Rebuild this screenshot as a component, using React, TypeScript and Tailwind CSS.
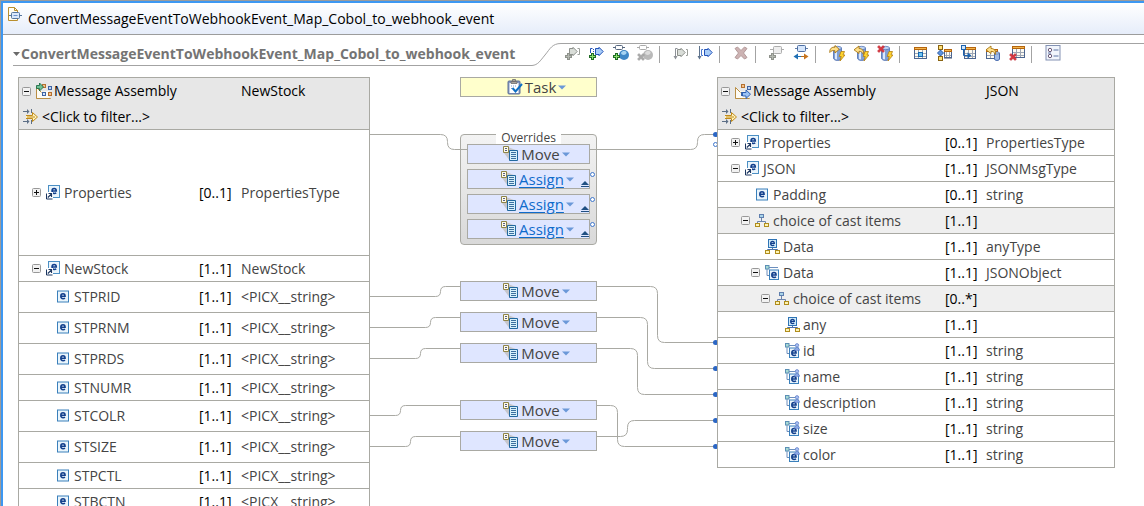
import React from "react";

type IconProps = { children: React.ReactNode; className?: string };

function Icon({ children, className = "" }: IconProps) {
  return (
    <svg
      viewBox="0 0 16 16"
      width="16"
      height="16"
      aria-hidden="true"
      className={`shrink-0 ${className}`}
      fill="none"
    >
      {children}
    </svg>
  );
}

/* ---------- shared glyph parts ---------- */

function Plus({ muted }: { muted?: boolean }) {
  return (
    <>
      <path
        d="M2 8h3v2h2v3h-2v2h-3v-2h-2v-3h2z"
        fill={muted ? "#8f938c" : "#1f6b24"}
        shapeRendering="crispEdges"
      />
      <path
        d="M3 9h1v2h2v1h-2v2h-1v-2h-2v-1h2z"
        fill={muted ? "#b4b8b1" : "#8be070"}
        shapeRendering="crispEdges"
      />
    </>
  );
}

function Cross({ x, y, muted }: { x: number; y: number; muted?: boolean }) {
  return (
    <g transform={`translate(${x} ${y})`}>
      <path
        d="M0 1.5 1.5 0 3.5 2 5.5 0 7 1.5 5 3.5 7 5.5 5.5 7 3.5 5 1.5 7 0 5.5 2 3.5z"
        fill={muted ? "#a9a9a9" : "#d8363f"}
        stroke={muted ? "#999" : "#b8202b"}
        strokeWidth=".5"
      />
    </g>
  );
}

function Pentagon({ x, y, muted }: { x: number; y: number; muted?: boolean }) {
  return (
    <path
      transform={`translate(${x} ${y})`}
      d="M.5 1.500v6h3.500v1.200l4.200-4.200L4 .3v1.200z"
      fill={muted ? "#d9ddd8" : "#a9cdf8"}
      stroke={muted ? "#8d918c" : "#2353b8"}
    />
  );
}

function Cylinder() {
  return (
    <>
      <path d="M4.500 3v10c0 3.300 8 3.300 8 0V3z" fill="#7f9fd6" stroke="#4a6cae" strokeWidth=".8" />
      <path d="M6 4v10l2 .6V4.500z" fill="#dbe8fb" />
      <ellipse cx="8.500" cy="3" rx="4" ry="1.700" fill="#bdd2f2" stroke="#4a6cae" strokeWidth=".7" />
      <path d="M12 6.500h3.500l-1.500 3.500h2l-5 6 1.200-4.500h-2z" fill="#ffd42e" stroke="#b47f10" strokeWidth=".8" />
    </>
  );
}

function Grid({ x = 1, y = 2, w = 13, h = 12 }: { x?: number; y?: number; w?: number; h?: number }) {
  const cell = w / 3;
  return (
    <g shapeRendering="crispEdges">
      <rect x={x} y={y} width={w} height={h} fill="#fdfbf2" />
      <path
        d={`M${x + cell} ${y + 3}v${h - 3}M${x + 2 * cell} ${y + 3}v${h - 3}M${x} ${y + 6}h${w}M${x} ${y + 9}h${w}`}
        stroke="#9fa7b5"
      />
      <path d={`M${x + 0.5} ${y + 3}V${y + h - 0.5}H${x + w - 0.5}V${y + 3}`} stroke="#4c6590" />
      <rect x={x} y={y} width={w} height="3" fill="#b5650e" />
      <rect x={x + 1} y={y + 1} width={w - 2} height="1" fill="#f3b64e" />
    </g>
  );
}

const CurveRight = () => (
  <path d="M.8 7.500C.5 3.500 3 1.800 6 2.200V.5l4.200 3.800L6 8V5.800C3.800 5.200 2.300 5.600 .8 7.500z" fill="#ffe08a" stroke="#a97713" strokeWidth=".9" />
);
const CurveLeft = () => (
  <path d="M10.500 9.500c.8-4-1.500-6-4.500-6V1L1 4.800 6 8.500V6.300c2 0 3.500 1 4.500 3.200z" fill="#ffe08a" stroke="#a97713" strokeWidth=".9" />
);

/* ---------- toolbar ---------- */

const toolGroups: { label: string; art: React.ReactNode }[][] = [
  [
    {
      label: "Add input",
      art: (
        <>
          <Pentagon x={4} y={2} muted />
          <path d="M12.500 3.500h2v6h-2" stroke="#9b9f9a" />
          <Plus muted />
        </>
      ),
    },
    {
      label: "Add output",
      art: (
        <>
          <path d="M1.500 8V3.500h2" stroke="#2353b8" />
          <path d="M4.500 4v6" stroke="#2353b8" strokeDasharray="1 1" />
          <Pentagon x={6} y={2} />
          <Plus />
        </>
      ),
    },
    {
      label: "Add database",
      art: (
        <>
          <circle cx="11" cy="10" r="5" fill="#3f87c6" />
          <path d="M8 8c1-2.500 5-2.500 5.500-.5S9 11.500 8 8z" fill="#a6d3f2" />
          <path d="M0 2.500h12" stroke="#56677f" />
          <rect x="2.500" y=".5" width="7" height="4" rx="1" fill="#fff" stroke="#56677f" />
          <Plus />
        </>
      ),
    },
    {
      label: "Remove database",
      art: (
        <>
          <circle cx="11" cy="10" r="5" fill="#b9b9b9" />
          <path d="M8 8c1-2.500 5-2.500 5.500-.5S9 11.500 8 8z" fill="#dcdcdc" />
          <path d="M0 2.500h12" stroke="#aaa" />
          <rect x="2.500" y=".5" width="7" height="4" rx="1" fill="#fff" stroke="#aaa" />
          <Cross x={0.5} y={8.5} muted />
        </>
      ),
    },
  ],
  [
    {
      label: "Match inputs",
      art: (
        <>
          <path d="M2.500 12V3.500h2" stroke="#8d9197" />
          <path d="M.5 11h4l-2 3.500z" fill="#8d9197" />
          <Pentagon x={4} y={3} muted />
          <path d="M13 4.500h1.500v6H13" stroke="#9b9f9a" />
        </>
      ),
    },
    {
      label: "Match outputs",
      art: (
        <>
          <path d="M2.500 1v11" stroke="#5f738c" />
          <path d="M.5 11h4l-2 3.500z" fill="#5f738c" />
          <path d="M6 4.500h-1.500v6H6" stroke="#4a78cf" />
          <Pentagon x={7} y={3} />
        </>
      ),
    },
  ],
  [
    {
      label: "Delete",
      art: (
        <path
          d="M2 3.500 4.500 2 8 5.500 11.500 2 14 3.500 10.500 8 14 12.500 11.500 14 8 10.500 4.500 14 2 12.500 5.500 8z"
          fill="#cdb3b3"
          stroke="#b49a9a"
        />
      ),
    },
  ],
  [
    {
      label: "Add transform",
      art: (
        <>
          <path d="M1 4.500h14" stroke="#adadad" />
          <rect x="4.500" y="1.500" width="8" height="7" rx="1" fill="#eee" stroke="#adadad" />
          <Plus muted />
        </>
      ),
    },
    {
      label: "Swap",
      art: (
        <>
          <path d="M2 3.500h13" stroke="#6680a8" />
          <rect x="4.500" y=".5" width="8" height="6" rx="1" fill="#d6e6fb" stroke="#4d6ea3" />
          <path d="M5 8.500v6L.5 11.500z" fill="#1e6fb5" />
          <path d="M4 11.500h5" stroke="#1e6fb5" />
          <path d="M8 11.500h4" stroke="#b36a1a" />
          <path d="M11 8.500v6l4.500-3z" fill="#c9751d" />
        </>
      ),
    },
  ],
  [
    { label: "Route to database", art: (<><Cylinder /><CurveRight /></>) },
    { label: "Return from database", art: (<><Cylinder /><CurveLeft /></>) },
    { label: "Delete from database", art: (<><Cylinder /><Cross x={0.5} y={0.5} /></>) },
  ],
  [
    {
      label: "Select table",
      art: (
        <>
          <Grid />
          <rect x="5.500" y="7.500" width="4" height="4" fill="#6fc5f2" stroke="#1666b0" />
        </>
      ),
    },
    {
      label: "Join table",
      art: (
        <>
          <Grid x={7} y={4} w={8} h={9} />
          <path d="M3.500 3v10" stroke="#8a6a1c" />
          <rect x="1.500" y=".5" width="4" height="4" fill="#ffe27a" stroke="#8a6412" />
          <rect x="1.500" y="11.500" width="4" height="4" fill="#ffe27a" stroke="#8a6412" />
          <path d="M3.500 5 6.500 8l-3 3-3-3z" fill="#5b93dd" stroke="#2a5ba8" />
        </>
      ),
    },
    {
      label: "Map to table",
      art: (
        <>
          <Grid x={3} y={2} w={12} h={12} />
          <path d="M2.500 5v5.500h5" stroke="#1c62ad" />
          <path d="M6.500 7.500v6l4-3z" fill="#1c62ad" />
          <rect x=".5" y=".5" width="4" height="4" fill="#cfe5fb" stroke="#1c62ad" />
        </>
      ),
    },
    {
      label: "Return table",
      art: (
        <>
          <Grid x={1} y={4} w={12} h={10} />
          <path d="M9.500 8v6c0 2 5 2 5 0V8z" fill="#9fbce8" stroke="#4a6cae" />
          <ellipse cx="12" cy="8" rx="2.500" ry="1" fill="#d6e4f8" stroke="#4a6cae" strokeWidth=".7" />
          <CurveLeft />
        </>
      ),
    },
    {
      label: "Remove table",
      art: (
        <>
          <Grid x={3} y={1} w={13} h={12} />
          <Cross x={0.5} y={8.5} />
        </>
      ),
    },
  ],
  [
    {
      label: "Properties form",
      art: (
        <>
          <rect x="1" y=".5" width="14" height="14.500" fill="#f1f5fc" stroke="#8492b3" />
          <circle cx="5" cy="5" r="1.700" stroke="#6b5a78" fill="#fff" />
          <circle cx="5" cy="11" r="1.700" stroke="#6b5a78" fill="#fff" />
          <path d="M8.500 5h5M8.500 11h5M3 8h3" stroke="#5c74a5" />
        </>
      ),
    },
  ],
];

/* ---------- tree icons ---------- */

type Kind =
  | "assemblyIn"
  | "assemblyOut"
  | "elementRef"
  | "element"
  | "choice"
  | "any"
  | "child"
  | "cast";

const E = ({ x, y, s = 1 }: { x: number; y: number; s?: number }) => (
  <path
    transform={`translate(${x} ${y}) scale(${s})`}
    d="M.8 3.200h4.300C5.100 1.600 4.300.8 3 .8S.8 1.700.8 3.300 1.700 5.700 3.100 5.700c.8 0 1.400-.2 1.900-.6"
    stroke="#123f8c"
    strokeWidth="1.500"
  />
);

function KindIcon({ kind }: { kind: Kind }) {
  switch (kind) {
    case "assemblyIn":
    case "assemblyOut":
      return (
        <Icon>
          <path d="M.5 4.500v11h14" fill="#fdfbf4" stroke="#c9a65c" />
          <path d="M.5 4.500v11h12.500V8L6 8.500z" fill="#fdfbf4" />
          <path d="M.5 15.500v-11l5 5M.5 15.500h14" stroke="#b98e45" />
          <rect x="6.500" y="1.500" width="3" height="3" fill="#f6c18d" stroke="#b4702f" />
          <rect x="12.500" y="3.500" width="3" height="3" fill="#bcd3f2" stroke="#3f64a4" />
          <rect x="6.500" y="9.500" width="3" height="3" fill="#d5e4f8" stroke="#3f64a4" />
          {kind === "assemblyIn" ? (
            <>
              <rect x="12.500" y="9.500" width="3" height="3" fill="#f6c18d" stroke="#b4702f" />
              <path d="M.5 2.500v3h3V8L7.500 4 3.500 0v2.500z" fill="#6fc095" stroke="#1e6d45" strokeWidth=".9" />
            </>
          ) : (
            <path d="M7.500 9.500v3.500h3.500v2.500l4.500-4.300L11 7v2.500z" fill="#9cc3f5" stroke="#2457ae" strokeWidth=".9" />
          )}
        </Icon>
      );
    case "elementRef":
      return (
        <Icon>
          <rect x="2.500" y=".5" width="11" height="12" fill="#eaf5fc" stroke="#4b8fc4" />
          <E x={5.200} y={2.800} />
          <rect x="0" y="7" width="7" height="7.500" fill="#fff" />
          <path d="M.5 8.500v5.500h6" stroke="#1c3660" />
          <path d="M1.800 12.500 5 9.300M2.500 8.500h3v3.500" stroke="#1c3660" strokeWidth="1.200" />
        </Icon>
      );
    case "element":
      return (
        <Icon>
          <rect x="1.500" y="2" width="11" height="11" fill="#eaf5fc" stroke="#3a80bb" />
          <E x={4} y={4} />
        </Icon>
      );
    case "choice":
      return (
        <Icon>
          <path d="M6.500 5v3M2.500 11V8.500h8V11" stroke="#6c84ad" />
          <rect x="4.500" y="1.500" width="4" height="3" fill="#a9d3e8" stroke="#5f7fae" />
          <rect x=".5" y="10.500" width="4" height="3" fill="#fdf3b5" stroke="#b08d1d" />
          <rect x="9.500" y="10.500" width="4" height="3" fill="#fdf3b5" stroke="#b08d1d" />
        </Icon>
      );
    case "any":
      return (
        <Icon>
          <path d="M7.500 9v2M2.500 12v-1.500h10V12" stroke="#4d72ab" />
          <rect x="3.500" y=".5" width="8" height="8" fill="#cfe9f8" stroke="#2f74b5" />
          <E x={5} y={1.700} s={0.85} />
          <rect x=".5" y="11.500" width="4" height="3" fill="#fdf3b5" stroke="#b08d1d" />
          <rect x="10.500" y="11.500" width="4" height="3" fill="#fdf3b5" stroke="#b08d1d" />
        </Icon>
      );
    case "child":
    case "cast":
      return (
        <Icon>
          <path d="M2 4v6.500h2.500M4 2.500h9" stroke="#6c8fbe" />
          <rect x=".5" y=".5" width="3.500" height="3.500" fill="#a7d9d3" stroke="#5b8fb5" />
          <rect x="4.500" y="5" width="9" height="9.500" fill="#eaf5fc" stroke="#3a80bb" />
          <E x={6} y={6.800} />
          {kind === "cast" && (
            <>
              <path d="M9.500 7.300c0-3.500 5-3.500 5 0z" fill="#93b0ec" stroke="#5876c4" strokeWidth=".7" />
              <circle cx="12" cy="2.300" r="1.700" fill="#a9c1f2" stroke="#5876c4" strokeWidth=".7" />
            </>
          )}
        </Icon>
      );
  }
}

const FilterIcon = () => (
  <Icon>
    <path d="M0 2.500h5M0 12.500h5M8.500 0v4M8.500 11v4" stroke="#5d6f86" />
    <path d="M4 0v5L6.500 2.500zM4 10v5l2.500-2.500z" fill="#5d6f86" />
    <path d="M3 6.500h6.500v-3l5 4.500-5 4.500v-3H3" fill="#fff3bd" stroke="#c08a1b" />
    <path d="M4 8h8" stroke="#c08a1b" />
  </Icon>
);

const MoveIcon = () => (
  <Icon>
    <path d="M5 1l9 3.500-7 10.500L1 7z" fill="#c6c6cb" />
    <path d="M.5.5h5v6h-5z" fill="#fffbe8" stroke="#8f8549" />
    <path d="M2 2.500h2M2 4.500h2" stroke="#555e85" />
    <path d="M6.500 4.500h8v10h-8z" fill="#d7f0fb" stroke="#21689f" />
    <path d="M8 6.500h5M8 8.500h5M8 10.500h5M8 12.500h5" stroke="#3b6f9f" />
  </Icon>
);

const TaskIcon = () => (
  <Icon>
    <rect x="1" y="2" width="12" height="13" rx="1" fill="#8299c4" stroke="#5e6f93" />
    <rect x="2.500" y="4" width="9" height="10" fill="#fff" />
    <path d="M4 2.500h6v2H4zM5.500.5h3v2h-3z" fill="#a9a39a" stroke="#6d6c70" strokeWidth=".8" />
    <path d="M4 7h5M4 9.500h2" stroke="#7d9fd0" strokeDasharray="1 1" />
    <path d="M5.500 9 8.500 12.500l6.500-7.500" stroke="#0d6fc4" strokeWidth="2" />
  </Icon>
);

const Caret = () => (
  <svg viewBox="0 0 8 5" width="8" height="5" aria-hidden="true" className="shrink-0">
    <path d="M0 .5h8l-4 4z" fill="#6b98d8" />
  </svg>
);

function Expander({ open, name }: { open: boolean; name: string }) {
  return (
    <button type="button" aria-label={`${open ? "Collapse" : "Expand"} ${name}`} aria-expanded={open} className="mr-[5px] block size-[9px] shrink-0">
      <svg viewBox="0 0 9 9" width="9" height="9" aria-hidden="true">
        <rect x=".5" y=".5" width="8" height="8" rx="1" fill="#f2f2f2" stroke="#989898" />
        <path d={open ? "M2 4.500h5" : "M2 4.500h5M4.500 2v5"} stroke="#111" />
      </svg>
    </button>
  );
}

/* ---------- trees ---------- */

type Row = {
  name: string;
  card: string;
  type?: string;
  kind: Kind;
  level: number;
  open?: boolean;
  height?: "tall" | "medium" | "last";
  shaded?: boolean;
};

const inputRows: Row[] = [
  { name: "Properties", card: "[0..1]", type: "PropertiesType", kind: "elementRef", level: 1, open: false, height: "tall" },
  { name: "NewStock", card: "[1..1]", type: "NewStock", kind: "elementRef", level: 1, open: true },
  { name: "STPRID", card: "[1..1]", type: "<PICX__string>", kind: "element", level: 2, height: "medium" },
  { name: "STPRNM", card: "[1..1]", type: "<PICX__string>", kind: "element", level: 2, height: "medium" },
  { name: "STPRDS", card: "[1..1]", type: "<PICX__string>", kind: "element", level: 2, height: "medium" },
  { name: "STNUMR", card: "[1..1]", type: "<PICX__string>", kind: "element", level: 2 },
  { name: "STCOLR", card: "[1..1]", type: "<PICX__string>", kind: "element", level: 2, height: "medium" },
  { name: "STSIZE", card: "[1..1]", type: "<PICX__string>", kind: "element", level: 2, height: "medium" },
  { name: "STPCTL", card: "[1..1]", type: "<PICX__string>", kind: "element", level: 2 },
  { name: "STBCTN", card: "[1..1]", type: "<PICX__string>", kind: "element", level: 2, height: "last" },
];

const outputRows: Row[] = [
  { name: "Properties", card: "[0..1]", type: "PropertiesType", kind: "elementRef", level: 1, open: false },
  { name: "JSON", card: "[1..1]", type: "JSONMsgType", kind: "elementRef", level: 1, open: true },
  { name: "Padding", card: "[0..1]", type: "string", kind: "element", level: 2 },
  { name: "choice of cast items", card: "[1..1]", kind: "choice", level: 2, open: true, shaded: true },
  { name: "Data", card: "[1..1]", type: "anyType", kind: "any", level: 3 },
  { name: "Data", card: "[1..1]", type: "JSONObject", kind: "child", level: 3, open: true },
  { name: "choice of cast items", card: "[0..*]", kind: "choice", level: 4, open: true, shaded: true },
  { name: "any", card: "[1..1]", kind: "any", level: 5 },
  { name: "id", card: "[1..1]", type: "string", kind: "cast", level: 5 },
  { name: "name", card: "[1..1]", type: "string", kind: "cast", level: 5 },
  { name: "description", card: "[1..1]", type: "string", kind: "cast", level: 5 },
  { name: "size", card: "[1..1]", type: "string", kind: "cast", level: 5 },
  { name: "color", card: "[1..1]", type: "string", kind: "cast", level: 5, height: "last" },
];

const indents = ["pl-[3px]", "pl-[13px]", "pl-[23px]", "pl-[33px]", "pl-[43px]", "pl-[53px]"];
const rowHeights = { normal: "h-[26px]", medium: "h-[31px]", tall: "h-[126px]", last: "h-[25px]" };

type TreeProps = {
  label: string;
  type: string;
  kind: Kind;
  rows: Row[];
  nameCol: string;
  cardCol: string;
};

function Tree({ label, type, kind, rows, nameCol, cardCol }: TreeProps) {
  return (
    <table aria-label={`${label} ${type}`} className="w-full table-fixed border-separate border-spacing-0 border border-[#a9a9a3] bg-white text-left">
      <colgroup>
        <col className={nameCol} />
        <col className={cardCol} />
        <col />
      </colgroup>
      <thead className="bg-[#e7e7e7] text-black">
        <tr className="h-[26px]">
          <th colSpan={2} className="p-0 pl-[3px] font-normal">
            <div className="flex items-center">
              <Expander open name={label} />
              <KindIcon kind={kind} />
              <span className="ml-[2px]">{label}</span>
            </div>
          </th>
          <th className="p-0 font-normal">{type}</th>
        </tr>
        <tr className="h-[26px]">
          <th colSpan={3} className="border-b border-[#a9a9a3] p-0 pl-1 font-normal">
            <button type="button" className="flex items-center gap-[3px]">
              <FilterIcon />
              <span>&lt;Click to filter...&gt;</span>
            </button>
          </th>
        </tr>
      </thead>
      <tbody className="text-[#444]">
        {rows.map((row, i) => {
          const line = i < rows.length - 1 ? "border-b border-[#a9a9a3]" : "";
          return (
            <tr key={i} className={`${rowHeights[row.height ?? "normal"]} ${row.shaded ? "bg-[#efefef]" : ""}`}>
              <td className={`p-0 ${indents[row.level]} ${line}`}>
                <div className="flex items-center">
                  {row.open === undefined ? (
                    <span className="w-[14px] shrink-0" />
                  ) : (
                    <Expander open={row.open} name={row.name} />
                  )}
                  <KindIcon kind={row.kind} />
                  <span className="ml-[2px] whitespace-nowrap">{row.name}</span>
                </div>
              </td>
              <td className={`p-0 text-black ${line}`}>{row.card}</td>
              <td className={`p-0 ${line}`}>{row.type}</td>
            </tr>
          );
        })}
      </tbody>
    </table>
  );
}

/* ---------- transforms and connectors ---------- */

function MoveBox() {
  return (
    <button type="button" className="flex h-5 w-full items-center justify-center gap-[2px] border border-[#a9a9a3] bg-[#dfe6ff] pl-4 text-[15px] leading-none text-[#444]">
      <MoveIcon />
      Move
      <Caret />
    </button>
  );
}

function AssignBox() {
  return (
    <button type="button" className="flex h-5 w-full items-center border border-[#a9a9a3] bg-[#dfe6ff] pl-[33px] text-[15px] leading-none text-[#444]">
      <MoveIcon />
      <span className="ml-[2px] mr-[2px] text-[#0f6bcb] underline underline-offset-2">Assign</span>
      <Caret />
      <svg viewBox="0 0 8 7" width="8" height="7" aria-hidden="true" className="mt-auto ml-auto">
        <path d="M0 4 4 0l4 4z" fill="#1f4f82" />
        <path d="M0 5.500h8" stroke="#1f4f82" />
      </svg>
    </button>
  );
}

type Link = { x1: number; y1: number; mid: number; x2: number; y2: number; dot?: boolean };

/* Coordinates are relative to the transform column. */
const links: Link[] = [
  { x1: 0, y1: 57.5, mid: 77.5, x2: 97, y2: 72.5 },
  { x1: 0, y1: 219.5, mid: 70.5, x2: 90, y2: 209.5 },
  { x1: 0, y1: 250.5, mid: 60.5, x2: 90, y2: 240.5 },
  { x1: 0, y1: 281.5, mid: 50.5, x2: 90, y2: 271.5 },
  { x1: 0, y1: 338.5, mid: 30.5, x2: 90, y2: 328.5 },
  { x1: 0, y1: 369.5, mid: 40.5, x2: 90, y2: 359.5 },
  { x1: 220, y1: 72.5, mid: 327.5, x2: 345, y2: 57.5, dot: true },
  { x1: 227, y1: 209.5, mid: 287.5, x2: 345, y2: 265.5, dot: true },
  { x1: 227, y1: 240.5, mid: 277.5, x2: 345, y2: 291.5, dot: true },
  { x1: 227, y1: 271.5, mid: 267.5, x2: 345, y2: 317.5, dot: true },
  { x1: 227, y1: 328.5, mid: 247.5, x2: 345, y2: 369.5, dot: true },
  { x1: 227, y1: 359.5, mid: 257.5, x2: 345, y2: 343.5, dot: true },
];

function linkPath({ x1, y1, mid, x2, y2 }: Link) {
  const r = Math.min(7, Math.abs(y2 - y1) / 2);
  const d = y2 > y1 ? r : -r;
  return `M${x1} ${y1}H${mid - r}Q${mid} ${y1} ${mid} ${y1 + d}V${y2 - d}Q${mid} ${y2} ${mid + r} ${y2}H${x2}`;
}

function Connectors() {
  return (
    <svg width="347" height="400" viewBox="0 0 347 400" aria-hidden="true" className="pointer-events-none absolute left-0 top-0" fill="none">
      {links.map((link, i) => (
        <path key={i} d={linkPath(link)} stroke="#a9a9a3" />
      ))}
      {links.filter((l) => l.dot).map((l) => (
        <circle key={l.y2} cx="345.500" cy={l.y2} r="2.500" fill="#2b66c4" />
      ))}
      {[[345.5, 67.5], [222.5, 97.5], [222.5, 122.5], [222.5, 147.5]].map(([x, y]) => (
        <circle key={y} cx={x} cy={y} r="2" fill="#fff" stroke="#3f77cc" />
      ))}
    </svg>
  );
}

function Transforms() {
  return (
    <div className="relative pl-[90px] pr-[120px]">
      <button type="button" className="flex h-5 w-full items-center justify-center gap-[2px] border border-[#a9a9a3] bg-[#ffffcc] pl-4 text-[15px] leading-none text-[#444]">
        <TaskIcon />
        Task
        <Caret />
      </button>
      <section aria-label="Overrides" className="mt-[37px] flex flex-col rounded border border-[#a9a9a3] bg-linear-to-b from-[#f3f3f3] to-[#d9d9d9] px-[6px] pb-[5px]">
        <h2 className="mx-auto -mt-[3px] h-3 w-[65px] bg-white text-center text-[12px] leading-3 text-[#444]">
          Overrides
        </h2>
        <div className="flex flex-col gap-[5px]">
          <MoveBox />
          <AssignBox />
          <AssignBox />
          <AssignBox />
        </div>
      </section>
      <div className="mt-9 flex flex-col gap-[11px]">
        <MoveBox />
        <MoveBox />
        <MoveBox />
      </div>
      <div className="mt-[37px] flex flex-col gap-[11px]">
        <MoveBox />
        <MoveBox />
      </div>
      <Connectors />
    </div>
  );
}

/* ---------- page ---------- */

export default function App() {
  return (
    <div className="h-screen overflow-hidden border-l border-t border-[#9b9b9b] bg-white font-['Open_Sans','Noto_Sans',sans-serif] text-[14px] leading-5 text-black">
      <div className="min-h-full border-l-2 border-t-2 border-[#3c97f2]">
        <header className="flex h-8 items-center gap-[5px] border-b border-[#9c9c9c] bg-linear-to-b from-white to-[#e6edfa] pl-1">
          <Icon className="mb-2">
            <path d="M1.500.5h6l3 3v10h-9z" fill="#fffdf2" stroke="#b98f2e" />
            <path d="M7.500.5v3h3" stroke="#b98f2e" />
            <path d="M2 8.500h13" stroke="#56779f" />
            <rect x="4.500" y="5.500" width="8" height="6" rx="1" fill="#d9e8fb" stroke="#56779f" />
            <path d="M6.500 8.500h4" stroke="#6b93cc" />
          </Icon>
          <h1>ConvertMessageEventToWebhookEvent_Map_Cobol_to_webhook_event</h1>
        </header>

        <div className="mt-2 flex h-[23px] pl-[10px]">
          <div className="flex w-[519px] shrink-0 items-center border-b border-[#a3a3a3] text-[#747474]">
            <svg viewBox="0 0 7 4" width="7" height="4" aria-hidden="true" className="mr-px">
              <path d="M0 0h7L3.500 4z" fill="#6a6a6a" />
            </svg>
            <h2 className="font-bold">ConvertMessageEventToWebhookEvent_Map_Cobol_to_webhook_event</h2>
          </div>
          <svg viewBox="0 0 29 23" width="29" height="23" aria-hidden="true" className="shrink-0" fill="none">
            <path d="M0 22.500C6 22 8 18 13 12S20 .5 29 .5" stroke="#a3a3a3" />
          </svg>
          <div role="toolbar" aria-label="Map actions" className="flex min-w-0 flex-1 items-start border-t border-[#a3a3a3]">
            {toolGroups.map((group, g) => (
              <React.Fragment key={g}>
                {g > 0 && <span className="ml-[2px] mr-[9px] mt-[2px] h-[17px] w-px shrink-0 bg-[#a3a3a3]" />}
                {group.map((tool) => (
                  <button key={tool.label} type="button" aria-label={tool.label} className="flex w-6 shrink-0 justify-center pt-px">
                    <Icon>{tool.art}</Icon>
                  </button>
                ))}
              </React.Fragment>
            ))}
          </div>
        </div>

        <main className="mt-[11px] grid grid-cols-[minmax(0,352fr)_347px_minmax(0,398fr)] items-start pl-[15px] pr-[29px]">
          <Tree label="Message Assembly" type="NewStock" kind="assemblyIn" rows={inputRows} nameCol="w-[180px]" cardCol="w-[42px]" />
          <Transforms />
          <Tree label="Message Assembly" type="JSON" kind="assemblyOut" rows={outputRows} nameCol="w-[227px]" cardCol="w-[41px]" />
        </main>
      </div>
    </div>
  );
}
